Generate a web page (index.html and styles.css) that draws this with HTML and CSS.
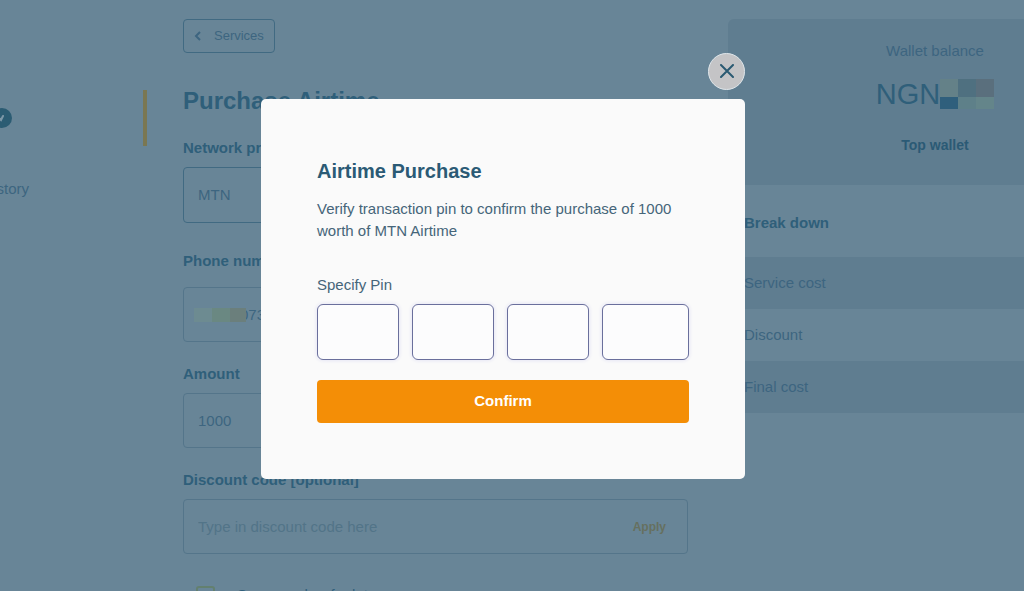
FILE: index.html
```html
<!DOCTYPE html>
<html lang="en">
<head>
    <meta charset="UTF-8">
    <meta name="viewport" content="width=device-width, initial-scale=1.0">
    <title>Purchase Airtime</title>
    <link rel="stylesheet" href="styles.css">
</head>
<body>
    <div class="page">
        <nav class="sidebar">
            <div class="links">
                <button class="toggle" aria-label="Toggle menu">
                    <svg width="20" height="20" viewBox="0 0 20 20" fill="none" stroke="#7d98a8" stroke-width="2" stroke-linecap="round"><path d="M5 8l4 4 2-4"/></svg>
                </button>
                <a href="#">story</a>
            </div>
            <span class="active-bar"></span>
        </nav>

        <main class="content">
            <button class="back-btn">
                <svg width="8" height="10" viewBox="0 0 8 10" fill="none" stroke="currentColor" stroke-width="2"><path d="M6 1L2 5l4 4"/></svg>
                Services
            </button>
            <h1>Purchase Airtime</h1>
            <form>
                <div class="field">
                    <label for="network">Network provider</label>
                    <select id="network" class="network">
                        <option>MTN</option>
                    </select>
                </div>
                <div class="field phone">
                    <label for="phone">Phone number</label>
                    <div class="control">
                        <span class="mask"><i></i><i></i><i></i></span>
                        <input type="text" id="phone" value="073">
                    </div>
                </div>
                <div class="field">
                    <label for="amount">Amount</label>
                    <input type="text" id="amount" value="1000">
                </div>
                <div class="field">
                    <label for="discount">Discount code [optional]</label>
                    <div class="control">
                        <input type="text" id="discount" placeholder="Type in discount code here">
                        <button type="button" class="apply-btn">Apply</button>
                    </div>
                </div>
                <label class="save"><input type="checkbox"> Save number for later</label>
            </form>
        </main>

        <aside class="summary">
            <div class="wallet">
                <p>Wallet balance</p>
                <div class="balance">NGN<span class="amount-mask"><i></i><i></i><i></i><i></i><i></i><i></i></span></div>
                <a href="#">Top wallet</a>
            </div>
            <h2>Break down</h2>
            <ul>
                <li>Service cost</li>
                <li>Discount</li>
                <li>Final cost</li>
            </ul>
        </aside>
    </div>

    <div class="overlay">
        <div class="modal" role="dialog" aria-labelledby="modalTitle">
            <button class="close-btn" aria-label="Close">
                <svg width="14" height="14" viewBox="0 0 14 14" fill="none" stroke="#2b5a72" stroke-width="2" stroke-linecap="round"><path d="M1 1l12 12M13 1L1 13"/></svg>
            </button>
            <h2 id="modalTitle">Airtime Purchase</h2>
            <p>Verify transaction pin to confirm the purchase of 1000 worth of MTN Airtime</p>
            <form>
                <label for="pin1">Specify Pin</label>
                <div class="pins">
                    <input type="password" id="pin1" maxlength="1">
                    <input type="password" maxlength="1" aria-label="Pin digit 2">
                    <input type="password" maxlength="1" aria-label="Pin digit 3">
                    <input type="password" maxlength="1" aria-label="Pin digit 4">
                </div>
                <button type="button" class="confirm-btn">Confirm</button>
            </form>
        </div>
    </div>
</body>
</html>
```
FILE: styles.css
```css
* {
    box-sizing: border-box;
}
body {
    font-family: 'Liberation Sans', Arial, sans-serif;
    font-size: 15px;
    line-height: 22px;
    margin: 0;
    height: 100vh;
    overflow: hidden;
    background-color: #688597;
    color: #3d6580;
}
h1, h2, p, ul {
    margin: 0;
    padding: 0;
}
a {
    color: inherit;
    text-decoration: none;
}
button, input, select {
    font: inherit;
    color: inherit;
    margin: 0;
}
button {
    border: none;
    padding: 0;
    background: none;
    cursor: pointer;
}

/* page behind the modal */
.page {
    display: flex;
    gap: 40px;
    padding-top: 19px;
}
.sidebar {
    display: flex;
    justify-content: space-between;
    flex: 0 0 147px;
    margin-right: -4px;
}
.links {
    display: flex;
    flex-direction: column;
    align-items: flex-end;
    gap: 50px;
    width: 29px;
    padding-top: 89px;
}
.toggle {
    width: 20px;
    height: 20px;
    margin-right: 17px;
    border-radius: 50%;
    background-color: #2b5c73;
}
.toggle svg {
    display: block;
}
.active-bar {
    width: 4px;
    height: 56px;
    margin-top: 71px;
    background-color: #7a7752;
}
.content {
    flex: 1;
}
.back-btn {
    display: flex;
    align-items: center;
    gap: 12px;
    height: 34px;
    padding: 0 10px;
    border: 1px solid #416a82;
    border-radius: 4px;
    font-size: 13px;
}
h1 {
    margin: 32px 0 20px;
    font-size: 24px;
    line-height: 32px;
    color: #2f5f7a;
}
.field {
    display: flex;
    flex-direction: column;
    gap: 8px;
    margin-bottom: 21px;
}
.field label {
    font-weight: bold;
    color: #2f5f7a;
}
.field > input, .field > select, .control {
    width: 100%;
    height: 55px;
    padding: 0 14px;
    border: 1px solid #54758a;
    border-radius: 4px;
    background: none;
}
.field > .network {
    height: 56px;
    border-color: #416a82;
    appearance: none;
}
.network {
    margin-bottom: 6px;
}
.phone {
    gap: 15px;
}
.control {
    display: flex;
    align-items: center;
}
.control input {
    flex: 1;
    min-width: 0;
    padding: 0;
    border: none;
    background: none;
}
.phone .control {
    padding-left: 10px;
}
.phone input {
    margin-left: -6px;
}
::placeholder {
    color: #527488;
    opacity: 1;
}
.mask {
    display: grid;
    grid-template-columns: 18px 18px 16px;
    height: 14px;
    z-index: 1;
}
.mask i:nth-child(1) { background-color: #6d8b91; }
.mask i:nth-child(2) { background-color: #6a8882; }
.mask i:nth-child(3) { background-color: #6b7f7c; }
.apply-btn {
    padding: 0 7px;
    font-size: 12px;
    font-weight: bold;
    color: #66705f;
}
.save {
    display: flex;
    align-items: center;
    gap: 22px;
    margin-top: 30px;
    padding-left: 13px;
    color: #2f5f7a;
}
.save input {
    appearance: none;
    width: 19px;
    height: 19px;
    border: 2px solid #63806f;
    border-radius: 3px;
}
.summary {
    flex: 0 0 296px;
}
.wallet {
    display: flex;
    flex-direction: column;
    align-items: center;
    gap: 16px;
    height: 166px;
    padding: 21px 0 0 118px;
    border-radius: 6px 0 0 0;
    background-color: #5f7d90;
}
.balance {
    display: flex;
    align-items: center;
    margin-bottom: 8px;
    font-size: 29px;
    line-height: 32px;
    color: #2f5f7a;
}
.amount-mask {
    display: grid;
    grid-template: 18px 12px / 18px 18px 18px;
}
.amount-mask i:nth-child(1) { background-color: #648188; }
.amount-mask i:nth-child(2) { background-color: #4f7080; }
.amount-mask i:nth-child(3) { background-color: #5a6f7d; }
.amount-mask i:nth-child(4) { background-color: #2f5f7c; }
.amount-mask i:nth-child(5) { background-color: #5e8089; }
.amount-mask i:nth-child(6) { background-color: #64858a; }
.wallet a {
    font-size: 14px;
    font-weight: bold;
    color: #2b5a75;
}
.summary h2 {
    padding: 27px 16px 23px;
    font-size: 15px;
    line-height: 22px;
    color: #2f5f7a;
}
.summary ul {
    list-style: none;
}
.summary li {
    padding: 15px 16px;
}
.summary li:nth-child(odd) {
    background-color: #5f7d90;
}

/* pin modal */
.overlay {
    position: fixed;
    inset: 0;
    z-index: 10;
    display: flex;
    align-items: center;
    justify-content: center;
    padding: 0 18px 14px 0;
}
.modal {
    position: relative;
    width: 484px;
    padding: 56px;
    border-radius: 5px;
    background-color: #fafafa;
    color: #456579;
}
.close-btn {
    position: absolute;
    top: -46px;
    right: 0;
    display: flex;
    align-items: center;
    justify-content: center;
    width: 37px;
    height: 37px;
    border: 1px solid #dfe6ea;
    border-radius: 50%;
    background-color: #c4c4c6;
}
.modal h2 {
    margin-bottom: 11px;
    font-size: 20px;
    line-height: 32px;
    color: #2b5a75;
}
.modal p {
    margin-bottom: 32px;
}
.modal label {
    display: block;
}
.pins {
    display: grid;
    grid-template-columns: 82px 82px 82px 1fr;
    gap: 13px;
    margin: 8px 0 20px;
}
.pins input {
    width: 100%;
    height: 56px;
    padding: 0 14px;
    border: 1px solid #6a6f9c;
    border-radius: 6px;
    background-color: #fcfcfd;
    box-shadow: 0 0 4px #dcdcf2;
}
.confirm-btn {
    width: 100%;
    height: 43px;
    border-radius: 4px;
    background-color: #f48e06;
    color: #fff;
    font-weight: bold;
}
```
